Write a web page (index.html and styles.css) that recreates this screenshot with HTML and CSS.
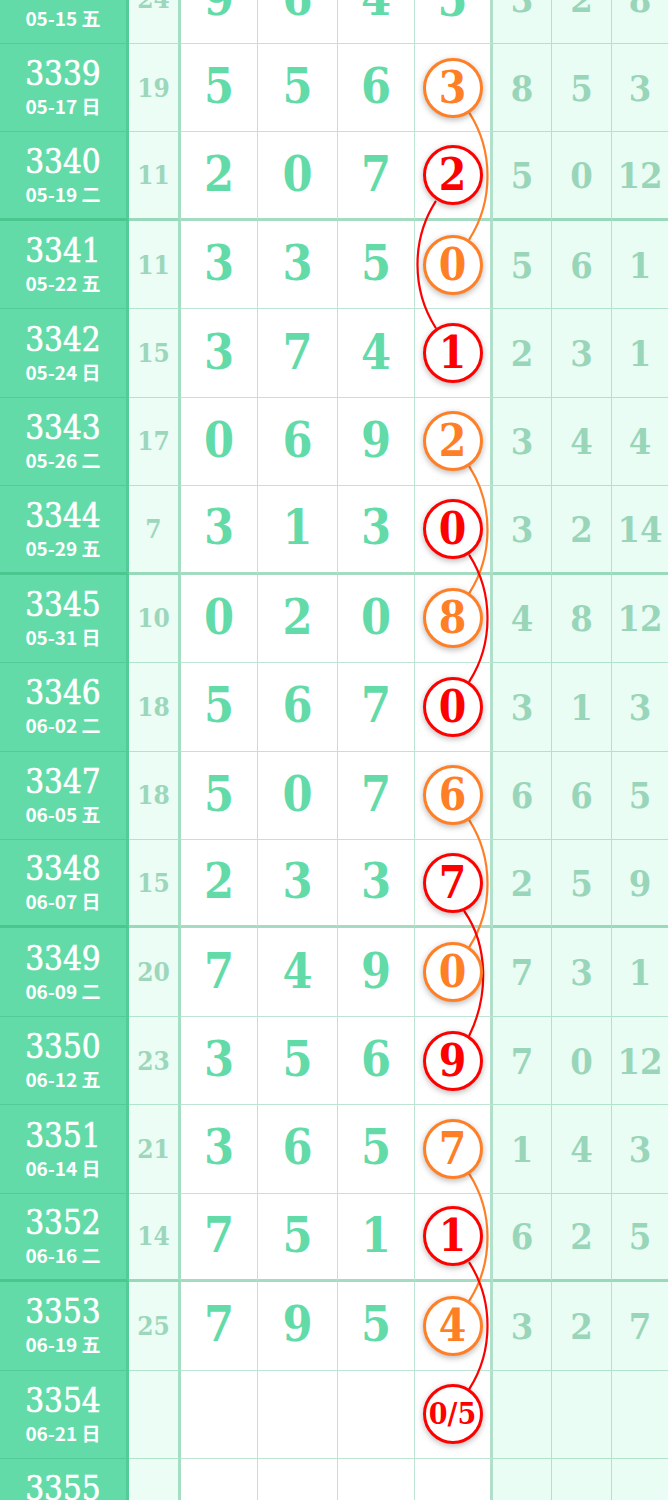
FILE: index.html
```html
<!DOCTYPE html>
<html lang="zh">
<head>
<meta charset="utf-8">
<title>走势图</title>
<link rel="stylesheet" href="styles.css">
</head>
<body>
<div class="chart">
  <div class="row">
    <div class="p"><span class="n">3338</span><span class="t">05-15 五</span></div>
    <div class="s">24</div><div class="d">9</div><div class="d">6</div><div class="d">4</div>
    <div class="k"><span class="plain">5</span></div>
    <div class="r">3</div><div class="r">2</div><div class="r">8</div>
  </div>
  <div class="row">
    <div class="p"><span class="n">3339</span><span class="t">05-17 日</span></div>
    <div class="s">19</div><div class="d">5</div><div class="d">5</div><div class="d">6</div>
    <div class="k"><span class="ball o">3</span></div>
    <div class="r">8</div><div class="r">5</div><div class="r">3</div>
  </div>
  <div class="row end">
    <div class="p"><span class="n">3340</span><span class="t">05-19 二</span></div>
    <div class="s">11</div><div class="d">2</div><div class="d">0</div><div class="d">7</div>
    <div class="k"><span class="ball x">2</span></div>
    <div class="r">5</div><div class="r">0</div><div class="r">12</div>
  </div>
  <div class="row">
    <div class="p"><span class="n">3341</span><span class="t">05-22 五</span></div>
    <div class="s">11</div><div class="d">3</div><div class="d">3</div><div class="d">5</div>
    <div class="k"><span class="ball o">0</span></div>
    <div class="r">5</div><div class="r">6</div><div class="r">1</div>
  </div>
  <div class="row">
    <div class="p"><span class="n">3342</span><span class="t">05-24 日</span></div>
    <div class="s">15</div><div class="d">3</div><div class="d">7</div><div class="d">4</div>
    <div class="k"><span class="ball x">1</span></div>
    <div class="r">2</div><div class="r">3</div><div class="r">1</div>
  </div>
  <div class="row">
    <div class="p"><span class="n">3343</span><span class="t">05-26 二</span></div>
    <div class="s">17</div><div class="d">0</div><div class="d">6</div><div class="d">9</div>
    <div class="k"><span class="ball o">2</span></div>
    <div class="r">3</div><div class="r">4</div><div class="r">4</div>
  </div>
  <div class="row end">
    <div class="p"><span class="n">3344</span><span class="t">05-29 五</span></div>
    <div class="s">7</div><div class="d">3</div><div class="d">1</div><div class="d">3</div>
    <div class="k"><span class="ball x">0</span></div>
    <div class="r">3</div><div class="r">2</div><div class="r">14</div>
  </div>
  <div class="row">
    <div class="p"><span class="n">3345</span><span class="t">05-31 日</span></div>
    <div class="s">10</div><div class="d">0</div><div class="d">2</div><div class="d">0</div>
    <div class="k"><span class="ball o">8</span></div>
    <div class="r">4</div><div class="r">8</div><div class="r">12</div>
  </div>
  <div class="row">
    <div class="p"><span class="n">3346</span><span class="t">06-02 二</span></div>
    <div class="s">18</div><div class="d">5</div><div class="d">6</div><div class="d">7</div>
    <div class="k"><span class="ball x">0</span></div>
    <div class="r">3</div><div class="r">1</div><div class="r">3</div>
  </div>
  <div class="row">
    <div class="p"><span class="n">3347</span><span class="t">06-05 五</span></div>
    <div class="s">18</div><div class="d">5</div><div class="d">0</div><div class="d">7</div>
    <div class="k"><span class="ball o">6</span></div>
    <div class="r">6</div><div class="r">6</div><div class="r">5</div>
  </div>
  <div class="row end">
    <div class="p"><span class="n">3348</span><span class="t">06-07 日</span></div>
    <div class="s">15</div><div class="d">2</div><div class="d">3</div><div class="d">3</div>
    <div class="k"><span class="ball x">7</span></div>
    <div class="r">2</div><div class="r">5</div><div class="r">9</div>
  </div>
  <div class="row">
    <div class="p"><span class="n">3349</span><span class="t">06-09 二</span></div>
    <div class="s">20</div><div class="d">7</div><div class="d">4</div><div class="d">9</div>
    <div class="k"><span class="ball o">0</span></div>
    <div class="r">7</div><div class="r">3</div><div class="r">1</div>
  </div>
  <div class="row">
    <div class="p"><span class="n">3350</span><span class="t">06-12 五</span></div>
    <div class="s">23</div><div class="d">3</div><div class="d">5</div><div class="d">6</div>
    <div class="k"><span class="ball x">9</span></div>
    <div class="r">7</div><div class="r">0</div><div class="r">12</div>
  </div>
  <div class="row">
    <div class="p"><span class="n">3351</span><span class="t">06-14 日</span></div>
    <div class="s">21</div><div class="d">3</div><div class="d">6</div><div class="d">5</div>
    <div class="k"><span class="ball o">7</span></div>
    <div class="r">1</div><div class="r">4</div><div class="r">3</div>
  </div>
  <div class="row end">
    <div class="p"><span class="n">3352</span><span class="t">06-16 二</span></div>
    <div class="s">14</div><div class="d">7</div><div class="d">5</div><div class="d">1</div>
    <div class="k"><span class="ball x">1</span></div>
    <div class="r">6</div><div class="r">2</div><div class="r">5</div>
  </div>
  <div class="row">
    <div class="p"><span class="n">3353</span><span class="t">06-19 五</span></div>
    <div class="s">25</div><div class="d">7</div><div class="d">9</div><div class="d">5</div>
    <div class="k"><span class="ball o">4</span></div>
    <div class="r">3</div><div class="r">2</div><div class="r">7</div>
  </div>
  <div class="row">
    <div class="p"><span class="n">3354</span><span class="t">06-21 日</span></div>
    <div class="s"></div><div class="d"></div><div class="d"></div><div class="d"></div>
    <div class="k"><span class="ball x sm">0/5</span></div>
    <div class="r"></div><div class="r"></div><div class="r"></div>
  </div>
  <div class="row">
    <div class="p"><span class="n">3355</span><span class="t">06-23 二</span></div>
    <div class="s"></div><div class="d"></div><div class="d"></div><div class="d"></div>
    <div class="k"></div>
    <div class="r"></div><div class="r"></div><div class="r"></div>
  </div>

  <svg class="links" width="668" height="1600" viewBox="0 0 668 1600" xmlns="http://www.w3.org/2000/svg">
    <g fill="none" stroke-width="2.2" stroke-linecap="round">
      <path class="lo" d="M469.5,157.1 C493.5,194.9 493.5,245.2 469.5,283.0"/>
      <path class="lx" d="M435.5,245.6 C411.5,283.4 411.5,333.7 435.5,371.5"/>
      <path class="lo" d="M469.5,510.9 C493.5,548.7 493.5,599.0 469.5,636.8"/>
      <path class="lx" d="M469.5,599.3 C493.5,637.1 493.5,687.4 469.5,725.2"/>
      <path class="lo" d="M469.5,864.7 C493.5,902.5 493.5,952.8 469.5,990.6"/>
      <path class="lx" d="M464.5,955.5 C488.5,990.0 488.5,1040.0 469.5,1079.0"/>
      <path class="lo" d="M469.5,1218.4 C493.5,1256.2 493.5,1306.5 469.5,1344.3"/>
      <path class="lx" d="M469.5,1306.9 C493.5,1344.7 493.5,1395.0 469.5,1432.7"/>
    </g>
  </svg>
</div>
</body>
</html>
```

FILE: styles.css
```css
* {
  box-sizing: border-box;
}

html,
body {
  margin: 0;
  padding: 0;
  background: #ffffff;
  overflow: hidden;
}

.chart {
  position: relative;
  width: 668px;
  margin-top: -44.44px;
  font-family: "DejaVu Serif Condensed", "DejaVu Serif", "Liberation Serif", serif;
  font-stretch: condensed;
}

.row {
  display: grid;
  grid-template-columns: 129px 52px 77px 80px 77px 78px 59px 60px 56px;
  height: 88.44px;
}

.row > div {
  display: flex;
  align-items: center;
  justify-content: center;
  border-right: 1px solid rgba(40, 170, 110, 0.3);
  border-bottom: 1px solid rgba(40, 170, 110, 0.3);
}

.row.end > div {
  border-bottom: 3px solid rgba(40, 170, 110, 0.42);
}

.row > .p {
  flex-direction: column;
  background: #63dba8;
  color: #ffffff;
  border-right: 3px solid rgba(0, 110, 60, 0.14);
}

.p .n {
  font-size: 33px;
  line-height: 1;
  -webkit-text-stroke: 0.6px #ffffff;
}

.p .t {
  font-family: "Noto Sans CJK SC", "Noto Sans", sans-serif;
  font-stretch: normal;
  font-weight: 700;
  font-size: 19px;
  line-height: 1.2;
  margin-top: 5px;
}

.row > .s {
  background: #ebfdf5;
  color: #9cd7bc;
  font-size: 26px;
  font-weight: 700;
  border-right: 3px solid rgba(40, 170, 110, 0.36);
}

.d {
  color: #62dba8;
  font-size: 48px;
  font-weight: 700;
  padding-bottom: 3px;
}

.row > .k {
  border-right: 3px solid rgba(40, 170, 110, 0.36);
}

.plain {
  color: #62dba8;
  font-size: 48px;
  font-weight: 700;
}

.r {
  background: #eafdf4;
  color: #99d6b9;
  font-size: 36px;
  font-weight: 700;
}

.row > .r:last-child {
  border-right: none;
}

.ball {
  position: relative;
  z-index: 2;
  width: 60px;
  height: 60px;
  border-radius: 50%;
  border: 3px solid;
  background: #ffffff;
  display: flex;
  align-items: center;
  justify-content: center;
  font-size: 44px;
  font-weight: 700;
  line-height: 1;
  box-shadow: 0 2px 6px rgba(0, 0, 0, 0.28);
}

.ball.o {
  color: #ff7f27;
  border-color: #ff7f27;
}

.ball.x {
  color: #ff0000;
  border-color: #ff0000;
}

.ball.sm {
  font-size: 30px;
}

.links {
  position: absolute;
  left: 0;
  top: 0;
  z-index: 1;
  pointer-events: none;
}

.lo {
  stroke: #ff7f27;
}

.lx {
  stroke: #ff0000;
}
```
